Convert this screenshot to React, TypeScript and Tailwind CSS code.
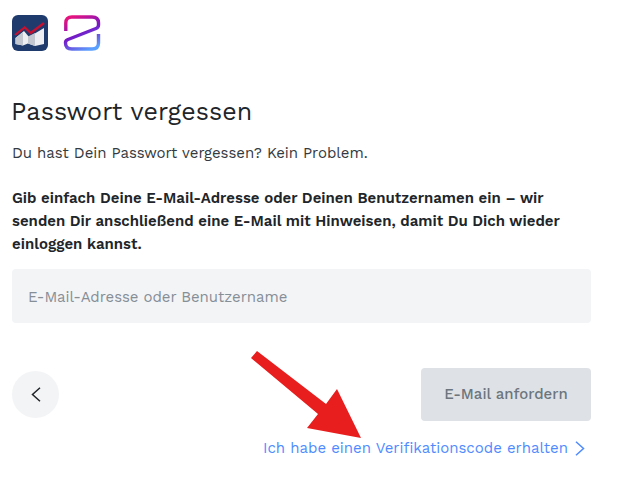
function ChartLogo() {
  return (
    <svg width="36" height="36" viewBox="0 0 36 36">
      <rect width="36" height="36" rx="6" fill="#1f3b6e" />
      <path d="M3.5 23 L12 16 L17 22 L32 13 V29 L23 31 L16 28.5 L11 30.5 L3.5 29 Z" fill="#eceef1" />
      <path d="M11 17 V30.5 L3.5 29 V23 Z M23 18 V31 L16 28.5 V21.5 Z" fill="#c3c7cf" />
      <path d="M3 20 L12.7 12.5 L18.7 18 L32 8" fill="none" stroke="#c8102e" strokeWidth="2.2" />
    </svg>
  );
}

function ZLogo() {
  return (
    <svg width="38" height="36" viewBox="0 0 38 36">
      <defs>
        <linearGradient id="zg" gradientUnits="userSpaceOnUse" x1="8" y1="2" x2="24" y2="36">
          <stop offset="0" stopColor="#e6127e" />
          <stop offset="0.5" stopColor="#7418c6" />
          <stop offset="1" stopColor="#5aa0ff" />
        </linearGradient>
      </defs>
      <path
        d="M2.8 16 V8 Q2.8 2 9 2 H29 Q35.5 2 35.5 8 V10 Q35.5 12.5 33 13.5 L5 24.5 Q2.5 25.5 2.5 27.5 V28 Q2.5 34 9 34 H29 Q35.5 34 35.5 28 V19"
        fill="none"
        stroke="url(#zg)"
        strokeWidth="3.4"
      />
    </svg>
  );
}

function Chevron({ left }: { left?: boolean }) {
  return (
    <svg width="10" height="15" viewBox="0 0 10 15" fill="none" stroke="currentColor" strokeWidth="1.5">
      <path d={left ? "M9 0.8 L1.5 7.5 L9 14.2" : "M1 0.8 L8.5 7.5 L1 14.2"} />
    </svg>
  );
}

export default function App() {
  return (
    <div className="relative w-[627px] h-[482px] overflow-hidden bg-white pl-3 pr-9 pt-[15px] font-['Work_Sans','Inter','Noto_Sans',sans-serif] text-[#212529]">
      <div className="flex gap-[15px]">
        <ChartLogo />
        <ZLogo />
      </div>

      <h1 className="mt-[45px] -ml-px text-[25px] leading-[32px] tracking-[0.12px] font-normal">Passwort vergessen</h1>
      <p className="mt-[13px] text-[15px] leading-[24px] tracking-[-0.05px] text-[#343a40]">
        Du hast Dein Passwort vergessen? Kein Problem.
      </p>
      <p className="mt-[22px] text-[15px] leading-[23px] font-semibold">
        Gib einfach Deine E-Mail-Adresse oder Deinen Benutzernamen ein – wir senden Dir anschließend eine E-Mail mit Hinweisen, damit Du Dich wieder einloggen kannst.
      </p>

      <div className="mt-[13px] flex h-[54px] w-[579px] items-center rounded bg-[#f3f4f6] px-[16px] pt-[2px] text-[15px] tracking-[-0.05px] text-[#868e96]">
        E-Mail-Adresse oder Benutzername
      </div>

      <div className="mt-[45px] flex w-[579px] items-center justify-between">
        <button className="flex h-[47px] w-[47px] items-center justify-center rounded-full bg-[#f3f4f6] text-[#212529]">
          <Chevron left />
        </button>
        <button className="h-[53px] w-[170px] rounded bg-[#dee2e6] text-[15px] font-medium text-[#6c757d]">
          E-Mail anfordern
        </button>
      </div>

      <div className="mt-[15px] flex w-[579px] items-center justify-end gap-[7px] pr-[6px] text-[15px] leading-[24px] text-[#4f8bff]">
        <span>Ich habe einen Verifikationscode erhalten</span>
        <Chevron />
      </div>

      <svg className="absolute left-0 top-0" width="627" height="482" viewBox="0 0 627 482">
        <polygon points="257,351 251,358 318,414 307,428 361,438 337,389 326,404" fill="#e81e1e" />
      </svg>
    </div>
  );
}
